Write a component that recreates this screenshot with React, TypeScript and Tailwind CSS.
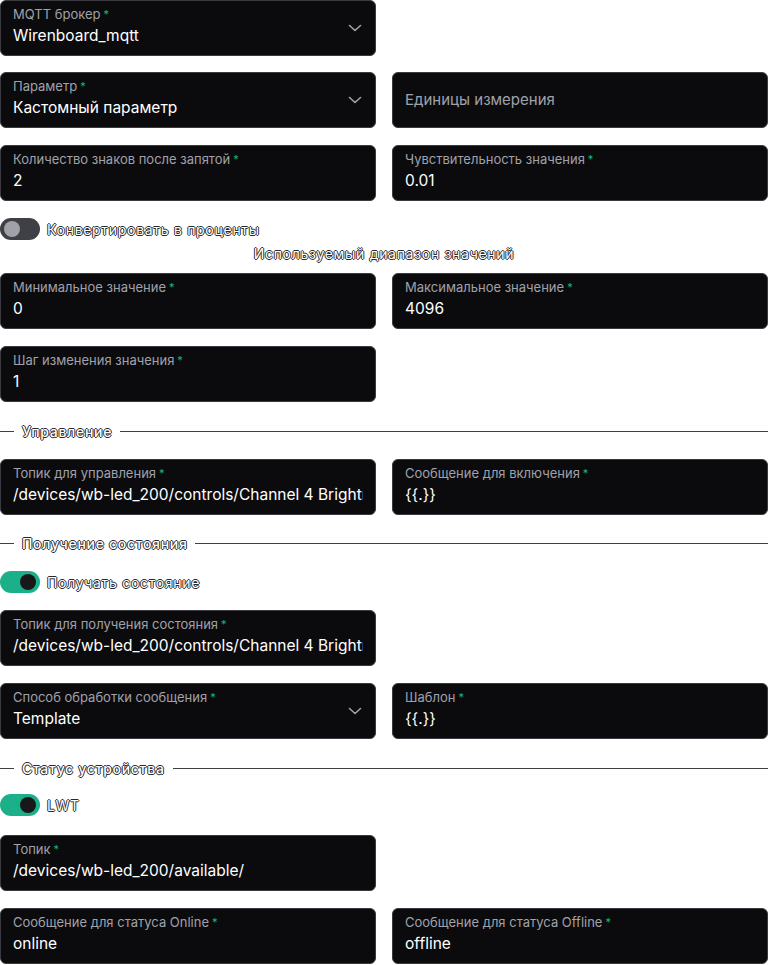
import React from 'react';

const outlined =
  'text-white tracking-[0.7px] [text-shadow:1px_0_0_#2a2a2e,-1px_0_0_#2a2a2e,0_1px_0_#2a2a2e,0_-1px_0_#2a2a2e]';

interface FieldProps {
  label: string;
  value?: string;
  required?: boolean;
  select?: boolean;
  placeholder?: string;
}

const Field: React.FC<FieldProps> = ({ label, value, required = true, select = false, placeholder }) => {
  return (
    <div className="relative h-[56px] w-[376px] rounded-md border border-[#3a3a40] bg-[#0b0b0e] overflow-hidden">
      {placeholder ? (
        <div className="h-full flex items-center pl-3 text-[15px] text-[#a1a1aa]">{placeholder}</div>
      ) : (
        <div className={`flex flex-col pt-[5px] pl-3 ${select ? 'pr-9' : 'pr-3'}`}>
          <span className="text-[13px] leading-4 text-[#a1a1aa] whitespace-nowrap">
            {label}
            {required && <span className="text-[#10b981] ml-[3px] text-[11px] align-top">*</span>}
          </span>
          <div className="overflow-hidden mt-[2px]">
            <span className="block text-[15.5px] leading-6 text-white whitespace-nowrap">{value}</span>
          </div>
        </div>
      )}
      {select && (
        <svg
          className="absolute right-[13px] top-[20px]"
          width="14"
          height="14"
          viewBox="0 0 14 14"
          fill="none"
          stroke="#a1a1aa"
          strokeWidth="1.6"
          strokeLinecap="round"
          strokeLinejoin="round"
        >
          <path d="M1.5 4.5 L7 9.5 L12.5 4.5" />
        </svg>
      )}
    </div>
  );
};

const Row: React.FC<{ children: React.ReactNode; className?: string }> = ({ children, className = '' }) => (
  <div className={`flex gap-4 ${className}`}>{children}</div>
);

const Toggle: React.FC<{ on: boolean; label: string; className?: string }> = ({ on, label, className = '' }) => (
  <div className={`flex items-center gap-[7px] h-[22px] ${className}`}>
    <div
      className={`w-[40px] h-[22px] rounded-full flex items-center px-[4px] ${
        on ? 'bg-[#1bb08a] justify-end' : 'bg-[#3f3f46] justify-start'
      }`}
    >
      <div className={`w-[16px] h-[16px] rounded-full ${on ? 'bg-[#18181b]' : 'bg-[#a1a1aa]'}`} />
    </div>
    <span className={`text-[14px] ${outlined}`}>{label}</span>
  </div>
);

const Divider: React.FC<{ title: string; className?: string }> = ({ title, className = '' }) => (
  <div className={`flex items-center h-[20px] ${className}`}>
    <div className="w-[14px] h-px bg-[#3f3f46]" />
    <span className={`px-2 text-[14px] font-medium ${outlined}`}>{title}</span>
    <div className="flex-1 h-px bg-[#3f3f46]" />
  </div>
);

export default function App() {
  return (
    <div className="w-[768px] bg-white font-['Inter','Noto_Sans',sans-serif] flex flex-col pb-[1px]">
      <Row>
        <Field label="MQTT брокер" value="Wirenboard_mqtt" select />
      </Row>
      <Row className="mt-[16px]">
        <Field label="Параметр" value="Кастомный параметр" select />
        <Field label="" placeholder="Единицы измерения" />
      </Row>
      <Row className="mt-[17px]">
        <Field label="Количество знаков после запятой" value="2" />
        <Field label="Чувствительность значения" value="0.01" />
      </Row>

      <Toggle on={false} label="Конвертировать в проценты" className="mt-[17px]" />
      <div className={`mt-[3px] h-[20px] text-center text-[14px] ${outlined}`}>Используемый диапазон значений</div>

      <Row className="mt-[10px]">
        <Field label="Минимальное значение" value="0" />
        <Field label="Максимальное значение" value="4096" />
      </Row>
      <Row className="mt-[17px]">
        <Field label="Шаг изменения значения" value="1" />
      </Row>

      <Divider title="Управление" className="mt-[19px]" />
      <Row className="mt-[18px]">
        <Field label="Топик для управления" value="/devices/wb-led_200/controls/Channel 4 Brightness" />
        <Field label="Сообщение для включения" value="{{.}}" />
      </Row>

      <Divider title="Получение состояния" className="mt-[18px]" />
      <Toggle on label="Получать состояние" className="mt-[18px]" />
      <Row className="mt-[17px]">
        <Field label="Топик для получения состояния" value="/devices/wb-led_200/controls/Channel 4 Brightness" />
      </Row>
      <Row className="mt-[17px]">
        <Field label="Способ обработки сообщения" value="Template" select />
        <Field label="Шаблон" value="{{.}}" />
      </Row>

      <Divider title="Статус устройства" className="mt-[19px]" />
      <Toggle on label="LWT" className="mt-[16px]" />
      <Row className="mt-[19px]">
        <Field label="Топик" value="/devices/wb-led_200/available/" />
      </Row>
      <Row className="mt-[17px]">
        <Field label="Сообщение для статуса Online" value="online" />
        <Field label="Сообщение для статуса Offline" value="offline" />
      </Row>
    </div>
  );
}
